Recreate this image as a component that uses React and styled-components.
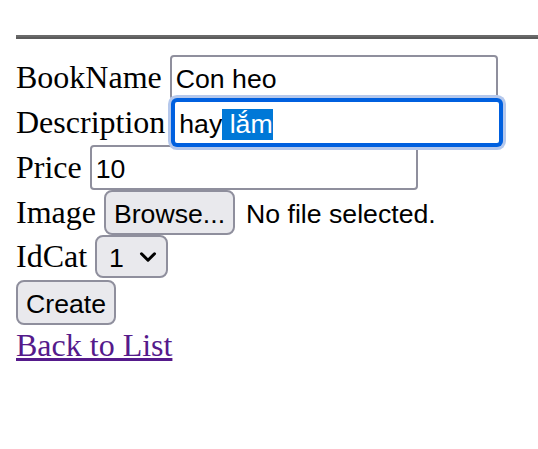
import { useEffect, useRef } from "react";
import styled, { createGlobalStyle } from "styled-components";
import { ChevronDown } from "lucide-react";

const GlobalStyle = createGlobalStyle`
  body {
    margin: 0;
    background: #fff;
    font-family: "Liberation Serif", "Times New Roman", serif;
    font-size: 32px;
    color: #000;
  }
`;

const Page = styled.div`
  padding-left: 16px;
  padding-top: 35px;
`;

const Rule = styled.hr`
  margin: 0 0 16px 0;
  height: 0;
  border: none;
  border-top: 2px solid #6a6a6a;
  border-bottom: 2px solid #5c5c5c;
`;

const Form = styled.form`
  display: flex;
  flex-direction: column;
`;

const Row = styled.div`
  display: flex;
  align-items: baseline;
  gap: 8px;
  height: 45px;
  white-space: nowrap;
`;

const Label = styled.label`
  font-size: 32px;
  line-height: 36.8px;
`;

const sans = `"Liberation Sans", Arial, sans-serif`;

const TextInput = styled.input`
  box-sizing: border-box;
  width: 328px;
  height: 45px;
  padding: 4px 4px 0;
  font-family: ${sans};
  font-size: 26.67px;
  color: #000;
  background: #fff;
  border: 2px solid ${(p) => (p.$focused ? "#0060df" : "#8f8f9d")};
  border-radius: 4px;
  outline: none;
  box-shadow: ${(p) =>
    p.$focused ? "0 0 0 2px #0060df, 0 0 0 5px #b5c8ec" : "none"};
  position: relative;
  z-index: ${(p) => (p.$focused ? 1 : 0)};

  &::selection {
    background: #0078d7;
    color: #fff;
  }
`;

const Button = styled.button`
  box-sizing: border-box;
  height: 45px;
  padding: 4px 8px 0;
  font-family: ${sans};
  font-size: 26.67px;
  color: #000;
  background: #e9e9ed;
  border: 2px solid #8f8f9d;
  border-radius: 8px;
`;

const FileNote = styled.span`
  font-family: ${sans};
  font-size: 26.67px;
  margin-left: 3px;
`;

const SelectWrap = styled.span`
  position: relative;
  display: inline-flex;
`;

const Select = styled.select`
  box-sizing: border-box;
  appearance: none;
  width: 73px;
  height: 43px;
  padding: 3px 0 0 12px;
  font-family: ${sans};
  font-size: 26.67px;
  color: #000;
  background: #e9e9ed;
  border: 2px solid #8f8f9d;
  border-radius: 8px;
`;

const Chevron = styled(ChevronDown)`
  position: absolute;
  right: 7px;
  top: 9px;
  pointer-events: none;
`;

const BackLink = styled.a`
  font-size: 32px;
  line-height: 36.8px;
  color: #551a8b;
  text-decoration: underline;
  align-self: flex-start;
  margin-top: 2px;
`;

export default function App() {
  const descRef = useRef(null);

  useEffect(() => {
    const el = descRef.current;
    if (el) {
      el.focus();
      el.setSelectionRange(3, 7);
    }
  }, []);

  return (
    <>
      <GlobalStyle />
      <Page>
        <Rule />
        <Form onSubmit={(e) => e.preventDefault()}>
          <Row>
            <Label>BookName</Label>
            <TextInput defaultValue="Con heo" />
          </Row>
          <Row>
            <Label>Description</Label>
            <TextInput ref={descRef} $focused defaultValue="hay lắm" />
          </Row>
          <Row>
            <Label>Price</Label>
            <TextInput defaultValue="10" />
          </Row>
          <Row>
            <Label>Image</Label>
            <Button type="button">Browse...</Button>
            <FileNote>No file selected.</FileNote>
          </Row>
          <Row>
            <Label>IdCat</Label>
            <SelectWrap>
              <Select defaultValue="1">
                <option value="1">1</option>
              </Select>
              <Chevron size={26} strokeWidth={2.8} color="#000" />
            </SelectWrap>
          </Row>
          <Row>
            <Button type="submit">Create</Button>
          </Row>
          <BackLink href="#">Back to List</BackLink>
        </Form>
      </Page>
    </>
  );
}
